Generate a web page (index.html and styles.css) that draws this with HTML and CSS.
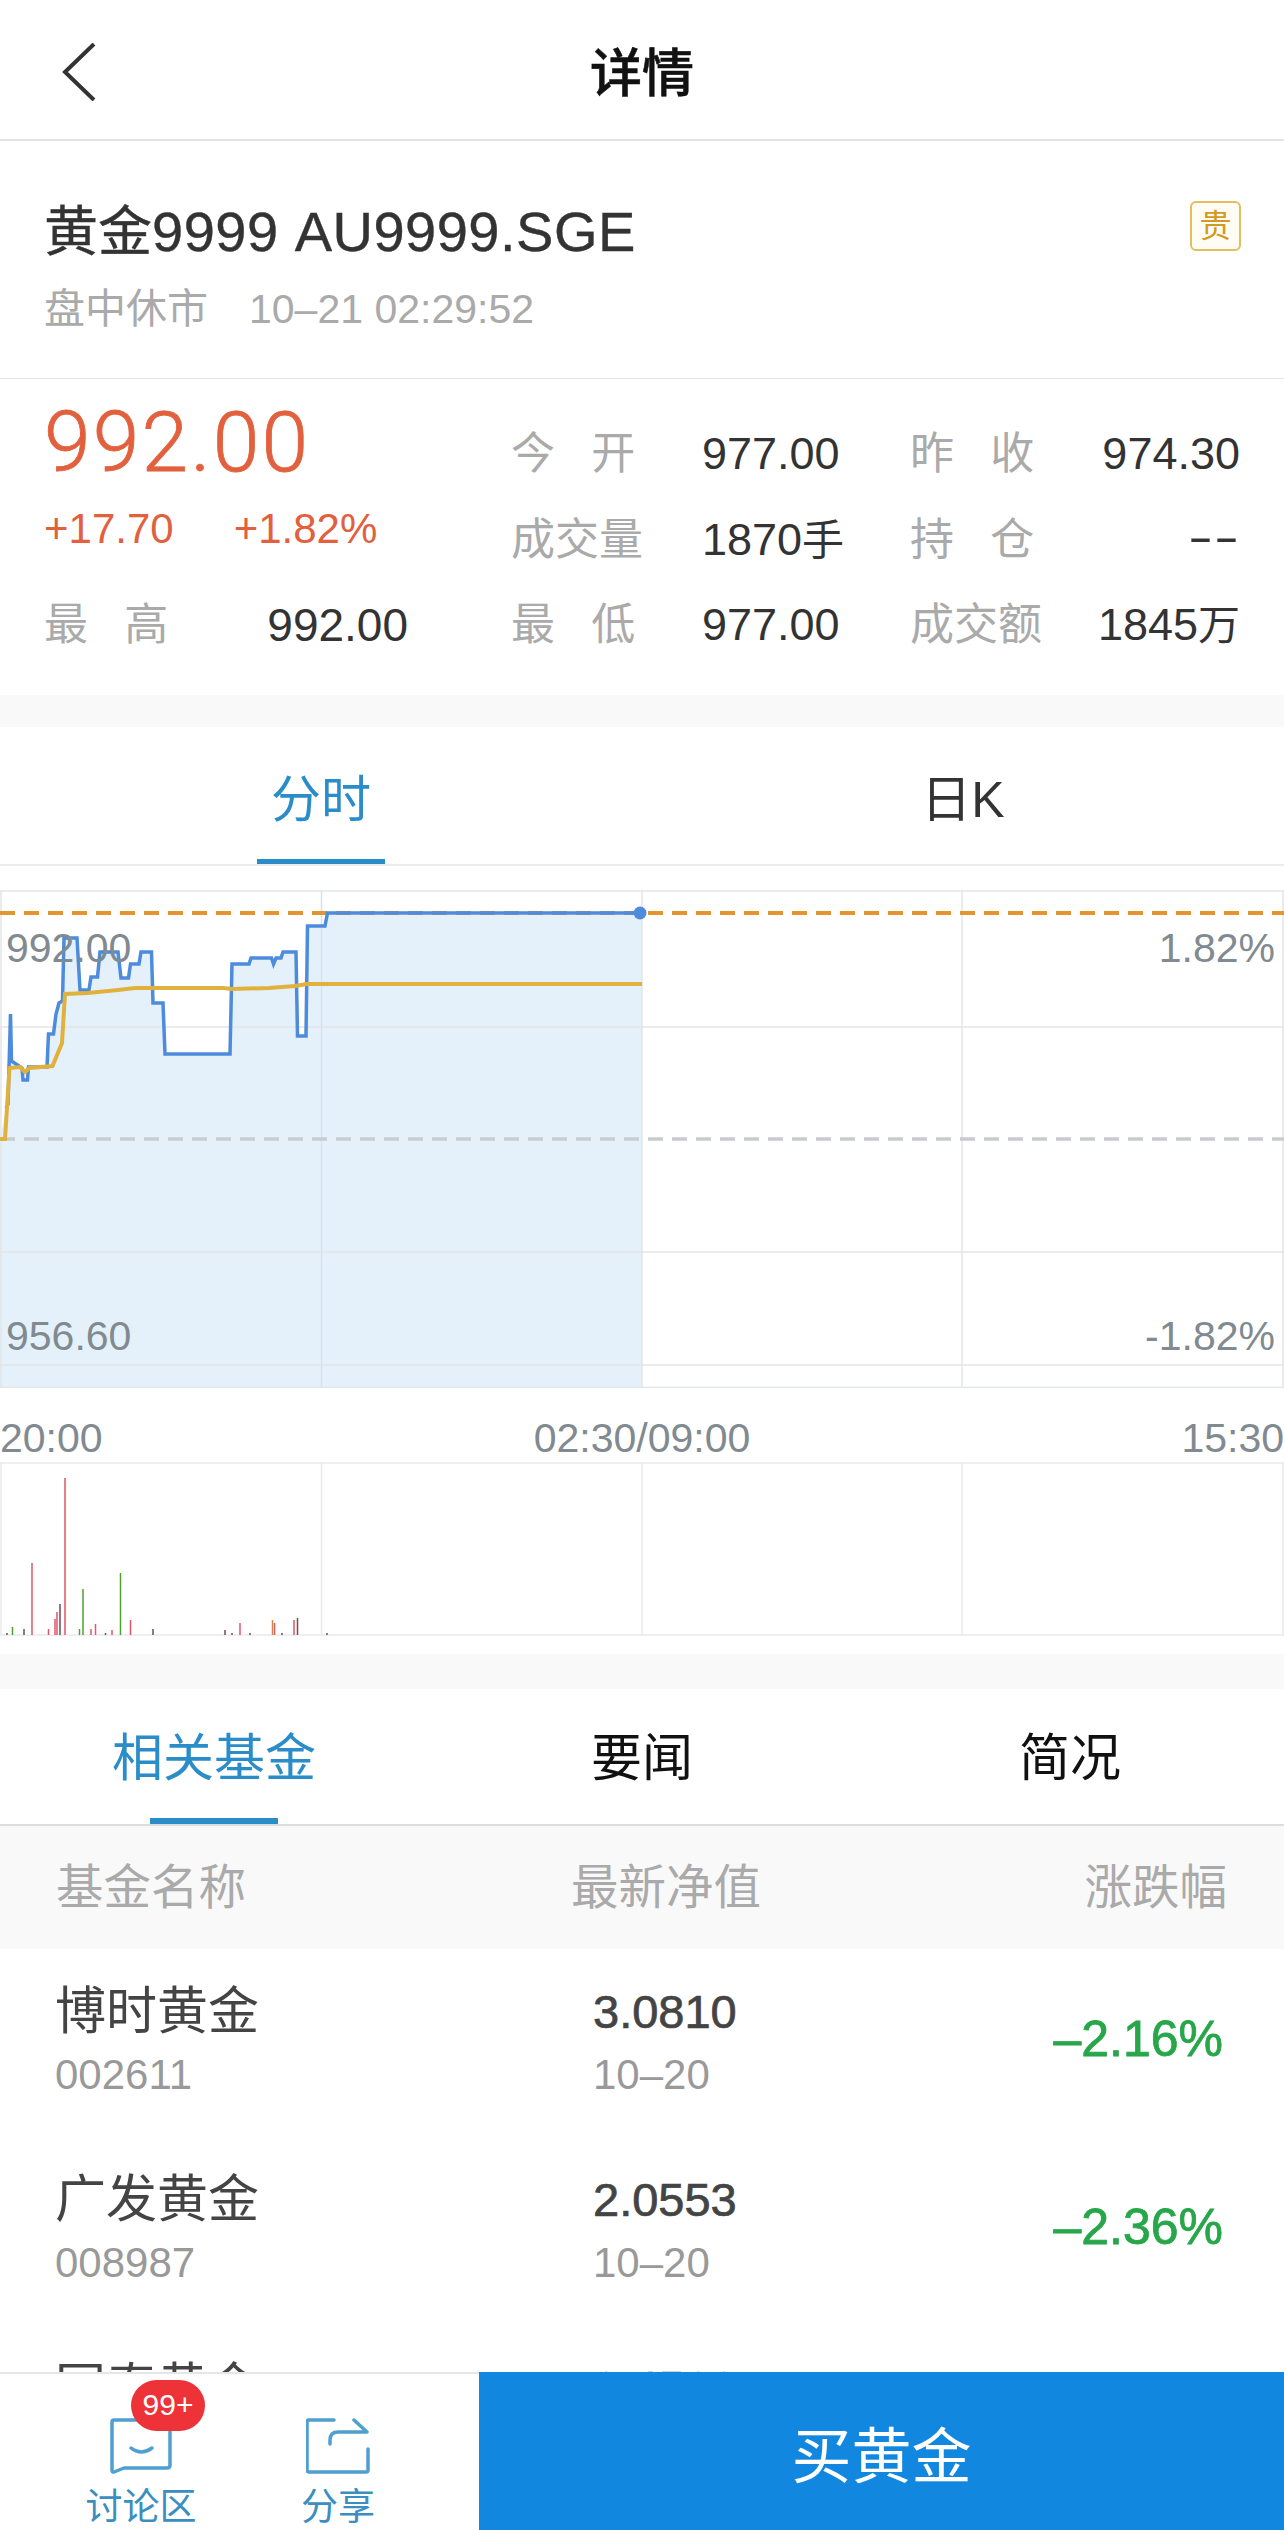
FILE: index.html
```html
<!DOCTYPE html>
<html lang="zh-CN">

<head>
    <meta charset="utf-8">
    <title>详情</title>
    <link rel="stylesheet" href="styles.css">
</head>

<body>
    <div class="page">
        <div class="content">
            <header class="topbar">
                <svg class="back" width="36" height="58" viewBox="0 0 36 58"><path d="M33 1 L4 29 L33 57" fill="none" stroke="#333" stroke-width="4"/></svg>
                <h1>详情</h1>
            </header>

            <section class="titel">
                <div>
                    <h2>黄金<span class="kode">9999 AU9999.SGE</span></h2>
                    <p class="status"><span>盘中休市</span><span>10–21 02:29:52</span></p>
                </div>
                <span class="badge">贵</span>
            </section>

            <section class="kurs">
                <div class="kurs-venstre">
                    <div class="pris">992.00</div>
                    <div class="aendring"><span>+17.70</span><span>+1.82%</span></div>
                    <div class="felt-hoej"><span class="lbl">最 高</span><span class="val">992.00</span></div>
                </div>
                <div class="kurs-grid">
                    <span class="lbl">今 开</span><span class="val">977.00</span><span class="lbl">昨 收</span><span class="val hoejre">974.30</span>
                    <span class="lbl">成交量</span><span class="val">1870<span class="enhed">手</span></span><span class="lbl">持 仓</span><span class="val hoejre streg">--</span>
                    <span class="lbl">最 低</span><span class="val">977.00</span><span class="lbl">成交额</span><span class="val hoejre">1845<span class="enhed">万</span></span>
                </div>
            </section>

            <div class="band"></div>

            <nav class="tabs">
                <button class="valgt">分时</button>
                <button>日K</button>
            </nav>

            <section class="graf">
                <svg class="linjer" width="1284" height="498" viewBox="0 889 1284 498">
                    <path d="M0 1138 6 1107 8 1103 10.500 1013 11.500 1060 22 1067 23 1079 27.500 1079 28.500 1066 47 1066 48.500 1033 53.500 1033 56 1013 59 1002 62.500 1000 64 937 77 937 80 989 89 989 91 976 97.500 976 100 951 118 951 121 977 128.500 977 130.500 963 139 963 141 951 151.500 951 153 1002 163 1002 165 1053 230 1053 232 963 249 963 251 957 271.500 957 273.500 963 276 957 281 957 283 951 296 951 297.500 1035 306 1035 307.500 925 325 925 327.500 912 642 912 642 1387 0 1387Z" fill="#e4f1fb"/>
                    <g stroke="#e2e5e8" stroke-width="1.500" fill="none">
                        <path d="M0 890H1284M0 1026H1284M0 1251H1284M0 1364H1284M0 1386.500H1284"/>
                        <path d="M1 890V1387M962 890V1387M642 890V1387M1283 890V1387"/>
                        <path d="M321.500 890V1387" stroke="#d6e3ed"/>
                    </g>
                    <path d="M0 1138H1284" stroke="#c8ccd0" stroke-width="3.500" stroke-dasharray="15 9" fill="none"/>
                    <path d="M0 912H1284" stroke="#e3962f" stroke-width="4" stroke-dasharray="15 9" fill="none"/>
                    <path d="M6 1107 8 1103 10.500 1013 11.500 1060 22 1067 23 1079 27.500 1079 28.500 1066 47 1066 48.500 1033 53.500 1033 56 1013 59 1002 62.500 1000 64 937 77 937 80 989 89 989 91 976 97.500 976 100 951 118 951 121 977 128.500 977 130.500 963 139 963 141 951 151.500 951 153 1002 163 1002 165 1053 230 1053 232 963 249 963 251 957 271.500 957 273.500 963 276 957 281 957 283 951 296 951 297.500 1035 306 1035 307.500 925 325 925 327.500 912 640 912" fill="none" stroke="#4d8bdc" stroke-width="3.500"/>
                    <path d="M0 1138 5 1138 9.500 1067 20 1066 25 1071 29.500 1067 52.500 1065 62 1042 65 993 88 992 118 989 135 987 223 987 231.500 988 269 987 295 985 307 983 642 983" fill="none" stroke="#e0b13c" stroke-width="4"/>
                    <circle cx="640" cy="912" r="6.500" fill="#4d8bdc"/>
                </svg>
                <span class="akse oppe venstre">992.00</span>
                <span class="akse oppe hoejre">1.82%</span>
                <span class="akse nede venstre">956.60</span>
                <span class="akse nede hoejre">-1.82%</span>
            </section>

            <div class="tider"><span>20:00</span><span>02:30/09:00</span><span>15:30</span></div>

            <section class="volumen">
                <svg width="1284" height="174" viewBox="0 1461 1284 174">
                    <g stroke="#e8eaec" stroke-width="1.500" fill="none">
                        <path d="M0 1462H1284M0 1634H1284M1 1461V1634M321.500 1461V1634M642 1461V1634M962 1461V1634M1283 1461V1634"/>
                    </g>
                    <g stroke-width="1.500" fill="none">
                        <path stroke="#e0566b" d="M32 1634V1562M65 1634V1477M57 1634V1611M55 1634V1618M48.500 1634V1628M91 1634V1628M95.500 1634V1623M112 1634V1629M130.500 1634V1619M240 1634V1622M274.500 1634V1622M294 1634V1619"/>
                        <path stroke="#4fa02c" d="M83 1634V1588M120.500 1634V1572M12.500 1634V1626M79.500 1634V1628"/>
                        <path stroke="#7a4a50" d="M60 1634V1603M24 1634V1628M105.500 1634V1632M153 1634V1628M225 1634V1629M297.500 1634V1617M7 1634V1632M232 1634V1632M250 1634V1632M282 1634V1632M327 1634V1632"/>
                        <path stroke="#d08a45" d="M272.500 1634V1619"/>
                    </g>
                </svg>
            </section>

            <div class="band band-2"></div>

            <nav class="fund-tabs">
                <button class="valgt">相关基金</button>
                <button>要闻</button>
                <button>简况</button>
            </nav>

            <div class="fund-hoved">
                <span>基金名称</span><span>最新净值</span><span>涨跌幅</span>
            </div>

            <article class="fond">
                <div class="navn">博时黄金<small>002611</small></div>
                <div class="netto"><b>3.0810</b><small>10–20</small></div>
                <div class="pct">–2.16%</div>
            </article>
            <article class="fond">
                <div class="navn">广发黄金<small>008987</small></div>
                <div class="netto"><b>2.0553</b><small>10–20</small></div>
                <div class="pct">–2.36%</div>
            </article>
            <article class="fond">
                <div class="navn">国泰黄金<small>004253</small></div>
                <div class="netto"><b>2.4566</b><small>10–20</small></div>
                <div class="pct">–2.30%</div>
            </article>
        </div>

        <footer class="bund">
            <div class="ikoner">
                <div class="ikon-knap">
                    <span class="boble">99+</span>
                    <svg width="62" height="56" viewBox="0 0 62 56" fill="none" stroke="#4f9fd0" stroke-width="3.500" stroke-linecap="round" stroke-linejoin="round">
                        <path d="M2 4Q2 2 4 2H59Q60 2 60 4V47Q60 50 57 50H14L4 54Q2 54.500 2 52Z"/>
                        <path d="M21 30Q31 38 42 30"/>
                    </svg>
                    <span>讨论区</span>
                </div>
                <div class="ikon-knap">
                    <svg width="64" height="56" viewBox="0 0 64 56" fill="none" stroke="#4f9fd0" stroke-width="3.500" stroke-linecap="round" stroke-linejoin="round">
                        <path d="M28 2H3Q1 2 1 4V52Q1 54 3 54H60Q62 54 62 52V31"/>
                        <path d="M24 26V22Q24 14 32 14H61L48 2"/>
                    </svg>
                    <span>分享</span>
                </div>
            </div>
            <button class="koeb">买黄金</button>
        </footer>
    </div>
</body>

</html>
```

FILE: styles.css
```css
* {
    box-sizing: border-box;
}

html,
body {
    margin: 0;
    background-color: white;
}

body {
    font-family: "Liberation Sans", "Noto Sans CJK SC", sans-serif;
    color: #333;
}

h1,
h2,
p {
    margin: 0;
    font-weight: normal;
}

button {
    font: inherit;
    background: none;
    border: none;
    padding: 0;
}

svg {
    display: block;
}

.page {
    width: 1284px;
    height: 2530px;
    display: flex;
    flex-direction: column;
    overflow: hidden;
}

.content {
    flex: 1;
    min-height: 0;
    overflow: hidden;
}

/* topbar */
.topbar {
    height: 141px;
    border-bottom: 2px solid #e4e4e4;
    display: flex;
    align-items: center;
    justify-content: center;
    position: relative;
}

.topbar h1 {
    font-size: 52px;
    font-weight: 500;
    color: #111;
    -webkit-text-stroke: 0.6px #111;
}

.back {
    position: absolute;
    left: 61px;
    top: 43px;
}

/* titel */
.titel {
    height: 238px;
    border-bottom: 1px solid #e4e4e4;
    padding: 59px 44px 0;
    display: flex;
    justify-content: space-between;
    align-items: flex-start;
}

.titel h2 {
    font-size: 54px;
    line-height: 64px;
    color: #333;
    -webkit-text-stroke: 0.4px #333;
}

.kode {
    font-size: 56px;
    letter-spacing: 0.5px;
}

.status {
    font-size: 41px;
    line-height: 48px;
    color: #aaa;
    margin-top: 21px;
    display: flex;
    gap: 41px;
}

.badge {
    width: 51px;
    height: 50px;
    margin-top: 1px;
    margin-right: -1px;
    border: 2px solid #e3bd5e;
    border-radius: 6px;
    background-color: #fffdf3;
    color: #d29a22;
    font-size: 32px;
    line-height: 46px;
    text-align: center;
}

/* kurs */
.kurs {
    height: 316px;
    padding: 0 44px;
    display: flex;
}

.kurs-venstre {
    width: 467px;
}

.pris {
    font-family: Roboto, "Liberation Sans", sans-serif;
    font-size: 84px;
    font-weight: 300;
    letter-spacing: 2.2px;
    line-height: 90px;
    padding-top: 19px;
    height: 108px;
    color: #e2603d;
    -webkit-text-stroke: 0.8px #e2603d;
}

.aendring {
    margin-top: 18px;
    display: flex;
    gap: 60px;
    font-size: 42px;
    line-height: 48px;
    color: #e2603d;
}

.felt-hoej {
    margin-top: 47px;
    width: 364px;
    display: flex;
    justify-content: space-between;
}

.felt-hoej .val {
    font-size: 46px;
}

.lbl {
    font-size: 44px;
    line-height: 50px;
    color: #aaa;
    word-spacing: 24px;
    white-space: nowrap;
}

.val {
    font-size: 45px;
    line-height: 50px;
    color: #333;
    white-space: nowrap;
}

.enhed {
    font-size: 42px;
}

.streg {
    font-size: 75px;
    letter-spacing: 1px;
    line-height: 40px;
    transform: translateY(-8px) scaleY(0.6);
}

.kurs-grid {
    flex: 1;
    padding-top: 50px;
    display: grid;
    grid-template-columns: 191px 208px 1fr auto;
    grid-auto-rows: 85.5px;
}

.hoejre {
    text-align: right;
}

.band {
    height: 32px;
    background-color: #f9f9f9;
}

/* tabs */
.tabs {
    height: 139px;
    border-bottom: 2px solid #ececec;
    display: grid;
    grid-template-columns: 1fr 1fr;
}

.tabs button {
    font-size: 50px;
    color: #333;
    position: relative;
    height: 137px;
    padding-bottom: 2px;
}

.tabs .valgt {
    color: #2a8cc8;
}

.tabs .valgt::after {
    content: "";
    position: absolute;
    left: 257px;
    bottom: 0;
    width: 128px;
    height: 5px;
    background-color: #2a8cc8;
}

/* graf */
.graf {
    margin-top: 24px;
    height: 498px;
    position: relative;
}

.akse {
    position: absolute;
    font-size: 41px;
    line-height: 46px;
    color: #818a90;
}

.oppe {
    top: 35px;
}

.nede {
    top: 423px;
}

.venstre {
    left: 6px;
}

.akse.hoejre {
    right: 9px;
}

.tider {
    height: 74px;
    padding-top: 27px;
    display: flex;
    justify-content: space-between;
    font-size: 41px;
    line-height: 46px;
    color: #818a90;
}

.volumen {
    height: 192px;
}

.band-2 {
    height: 35px;
}

/* fonde */
.fund-tabs {
    height: 137px;
    border-bottom: 2px solid #ddd;
    display: grid;
    grid-template-columns: repeat(3, 1fr);
}

.fund-tabs button {
    font-size: 51px;
    color: #111;
    height: 135px;
    padding-bottom: 6px;
    position: relative;
}

.fund-tabs .valgt {
    color: #2a8cc8;
}

.fund-tabs .valgt::after {
    content: "";
    position: absolute;
    left: 150px;
    bottom: 0;
    width: 128px;
    height: 6px;
    background-color: #2a8cc8;
}

.fund-hoved {
    height: 123px;
    padding: 0 57px 8px 56px;
    background-color: #f9f9f9;
    display: grid;
    grid-template-columns: 515px 1fr auto;
    align-items: center;
    font-size: 47.5px;
    color: #aaa;
}

.fond {
    height: 188px;
    padding: 31px 61px 0 55px;
    display: grid;
    grid-template-columns: 538px 1fr auto;
    font-size: 51px;
    line-height: 64px;
    color: #444;
}

.fond small {
    display: block;
    font-size: 42px;
    line-height: 50px;
    margin-top: 6px;
    color: #999;
}

.netto b {
    display: block;
    font-size: 47px;
    font-weight: normal;
    -webkit-text-stroke: 0.7px #444;
}

.pct {
    align-self: start;
    padding-top: 27px;
    color: #27a64a;
    font-size: 50px;
    -webkit-text-stroke: 0.8px #27a64a;
}

/* bund */
.bund {
    height: 158px;
    display: grid;
    grid-template-columns: 479px 1fr;
    border-top: 2px solid #e6e6e6;
    background-color: white;
}

.ikoner {
    padding-left: 51px;
    display: flex;
    gap: 17px;
}

.ikon-knap {
    width: 180px;
    position: relative;
    padding-top: 44px;
    display: flex;
    flex-direction: column;
    align-items: center;
    gap: 11px;
    font-size: 37px;
    line-height: 46px;
    color: #3a8fc0;
}

.boble {
    position: absolute;
    left: 80px;
    top: 6px;
    width: 74px;
    height: 51px;
    border-radius: 26px;
    background-color: #ee3338;
    color: white;
    font-size: 30px;
    line-height: 49px;
    text-align: center;
}

.koeb {
    margin-top: -2px;
    background-color: #1287e0;
    color: white;
    font-size: 60px;
}
```
